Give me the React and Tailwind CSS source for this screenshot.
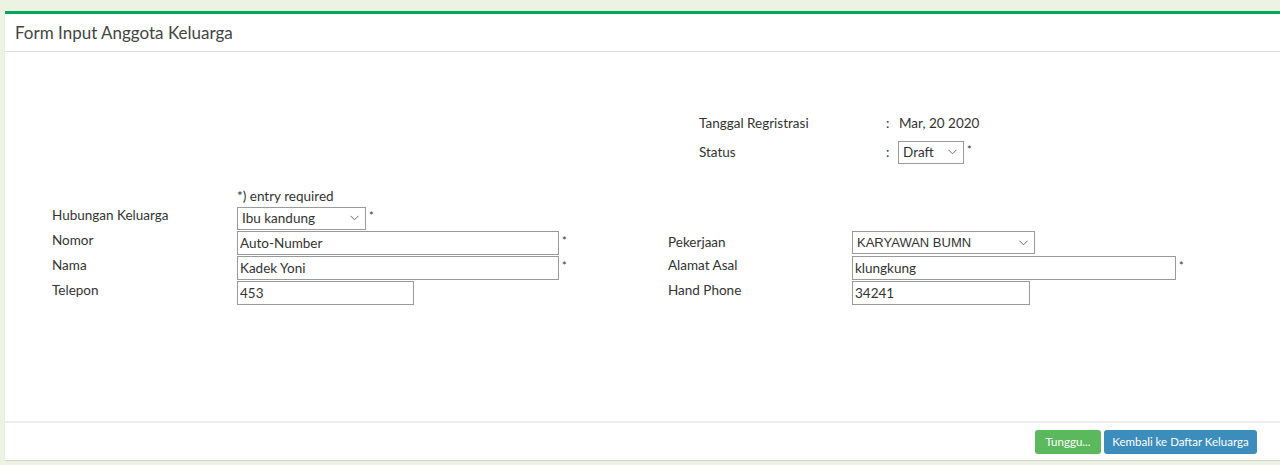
import { useState } from 'react';

const font = { fontFamily: 'Lato, "Liberation Sans", sans-serif' };

function Chevron() {
  return (
    <svg
      className="absolute right-[7px] top-1/2 -translate-y-1/2 pointer-events-none"
      width="9"
      height="6"
      viewBox="0 0 9 6"
      fill="none"
    >
      <path d="M0.5 0.8 L4.5 4.8 L8.5 0.8" stroke="#6b6b6b" strokeWidth="1" />
    </svg>
  );
}

function Select({ value, onChange, options, className, style }) {
  return (
    <div className={`relative h-[23px] ${className}`}>
      <select
        value={value}
        onChange={onChange}
        style={style}
        className="appearance-none w-full h-full bg-white border border-[#9a9a9a] pl-[4px] pr-[18px] text-[13.5px] outline-none"
      >
        {options.map((o) => (
          <option key={o}>{o}</option>
        ))}
      </select>
      <Chevron />
    </div>
  );
}

export default function App() {
  const [hub, setHub] = useState('Ibu kandung');
  const [status, setStatus] = useState('Draft');
  const [kerja, setKerja] = useState('KARYAWAN BUMN');

  return (
    <div className="h-[465px] w-[1280px] overflow-hidden bg-[#ecf3e3] pt-[11px] pl-[5px]" style={font}>
      <div className="h-[449px] bg-white border-t-[3px] border-[#00a65a] shadow-[0_1px_1px_rgba(0,0,0,0.1)] flex flex-col text-[#333]">
        {/* Header */}
        <div className="h-[38px] border-b border-[#e2e2e2] flex items-center pl-[10px]">
          <h3 className="text-[17px] text-[#444] leading-none">Form Input Anggota Keluarga</h3>
        </div>

        {/* Body */}
        <div className="flex-1 text-[13.5px]">
          {/* Registrasi info */}
          <div className="pl-[694px] pt-[61px]">
            <div className="flex items-center h-[20px]">
              <span className="w-[187px]">Tanggal Regristrasi</span>
              <span className="w-[13px]">:</span>
              <span>Mar, 20 2020</span>
            </div>
            <div className="flex items-center h-[22px] mt-[8px]">
              <span className="w-[187px]">Status</span>
              <span className="w-[12px]">:</span>
              <Select
                value={status}
                onChange={(e) => setStatus(e.target.value)}
                options={['Draft', 'Final']}
                className="w-[66px]"
              />
              <span className="ml-[3px] -mt-[3px] text-[11px]">*</span>
            </div>
          </div>

          {/* Form columns */}
          <div className="flex pl-[47px] mt-[23px]">
            <div className="w-[616px]">
              <div className="pl-[185px] h-[20px] leading-[20px]">*) entry required</div>
              <div className="flex items-center h-[24px]">
                <span className="w-[185px] -mt-[5px]">Hubungan Keluarga</span>
                <Select
                  value={hub}
                  onChange={(e) => setHub(e.target.value)}
                  options={['Ibu kandung', 'Ayah kandung', 'Anak']}
                  className="w-[129px]"
                />
                <span className="ml-[3px] -mt-[3px] text-[11px]">*</span>
              </div>
              <Row label="Nomor" value="Auto-Number" width="w-[322px]" req />
              <Row label="Nama" value="Kadek Yoni" width="w-[322px]" req />
              <Row label="Telepon" value="453" width="w-[177px]" />
            </div>
            <div className="pt-[44px]">
              <div className="flex items-center h-[25px]">
                <span className="w-[184px]">Pekerjaan</span>
                <Select
                  value={kerja}
                  onChange={(e) => setKerja(e.target.value)}
                  options={['KARYAWAN BUMN', 'PNS', 'WIRASWASTA']}
                  className="w-[183px]"
                  style={{ fontFamily: '"Liberation Sans", Arial, sans-serif', fontSize: '13px' }}
                />
              </div>
              <Row label="Alamat Asal" value="klungkung" width="w-[324px]" lw="w-[184px]" req />
              <Row label="Hand Phone" value="34241" width="w-[178px]" lw="w-[184px]" />
            </div>
          </div>
        </div>

        {/* Footer */}
        <div className="h-[39px] border-t-2 border-[#ececec] flex items-center justify-end pr-[23px] gap-[3px]">
          <button className="h-[24px] w-[66px] rounded-[3px] bg-[#5cb85c] text-white text-[11.5px]">Tunggu...</button>
          <button className="h-[24px] w-[153px] rounded-[3px] bg-[#3c8dbc] text-white text-[11.5px]">Kembali ke Daftar Keluarga</button>
        </div>
      </div>
    </div>
  );
}

function Row({ label, value, width, req, lw = 'w-[185px]' }) {
  const [v, setV] = useState(value);
  return (
    <div className="flex items-center h-[25px]">
      <span className={`${lw} -mt-[5px]`}>{label}</span>
      <input
        value={v}
        onChange={(e) => setV(e.target.value)}
        className={`${width} h-[24px] border border-[#9a9a9a] px-[2px] text-[13.5px] outline-none`}
      />
      {req && <span className="ml-[3px] -mt-[3px] text-[11px]">*</span>}
    </div>
  );
}
